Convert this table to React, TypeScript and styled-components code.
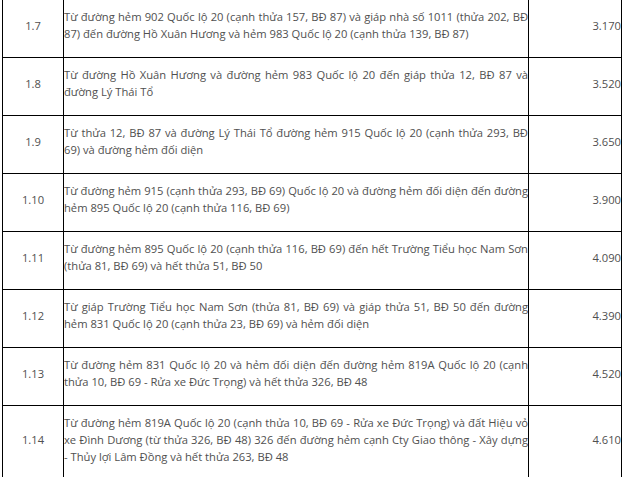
import React from 'react';
import styled, { createGlobalStyle } from 'styled-components';

const GlobalStyle = createGlobalStyle`
html, body{
  margin: 0;
  padding: 0;
  background: #FFFFFF;
  overflow: hidden;
}
`;

const Wrapper = styled.div`
padding: 0 0 0 2px;
margin-top: -1px;
`;

const PriceTable = styled.table`
width: 620px;
table-layout: fixed;
border-collapse: collapse;
font-family: "Open Sans", "Noto Sans", sans-serif;
font-size: 11.2px;
line-height: 17px;
color: #505050;
  td{
  border: 1px solid #000000;
  padding: 8px 0 15px 0;
  vertical-align: middle;
  }
`;

const NoCol = styled.col`
width: 61px;
`;

const TextCol = styled.col`
width: 465px;
`;

const PriceCol = styled.col`
width: 93px;
`;

const NoCell = styled.td`
text-align: center;
`;

const TextCell = styled.td`
text-align: justify;
`;

const PriceCell = styled.td`
text-align: right;
`;

type Row = { no: string; text: string; price: string };

const rows: Row[] = [
  {
    no: '1.7',
    text: 'Từ đường hẻm 902 Quốc lộ 20 (cạnh thửa 157, BĐ 87) và giáp nhà số 1011 (thửa 202, BĐ 87) đến đường Hồ Xuân Hương và hẻm 983 Quốc lộ 20 (cạnh thửa 139, BĐ 87)',
    price: '3.170',
  },
  {
    no: '1.8',
    text: 'Từ đường Hồ Xuân Hương và đường hẻm 983 Quốc lộ 20 đến giáp thửa 12, BĐ 87 và đường Lý Thái Tổ',
    price: '3.520',
  },
  {
    no: '1.9',
    text: 'Từ thửa 12, BĐ 87 và đường Lý Thái Tổ đường hẻm 915 Quốc lộ 20 (cạnh thửa 293, BĐ 69) và đường hẻm đối diện',
    price: '3.650',
  },
  {
    no: '1.10',
    text: 'Từ đường hẻm 915 (cạnh thửa 293, BĐ 69) Quốc lộ 20 và đường hẻm đối diện đến đường hẻm 895 Quốc lộ 20 (cạnh thửa 116, BĐ 69)',
    price: '3.900',
  },
  {
    no: '1.11',
    text: 'Từ đường hẻm 895 Quốc lộ 20 (cạnh thửa 116, BĐ 69) đến hết Trường Tiểu học Nam Sơn (thửa 81, BĐ 69) và hết thửa 51, BĐ 50',
    price: '4.090',
  },
  {
    no: '1.12',
    text: 'Từ giáp Trường Tiểu học Nam Sơn (thửa 81, BĐ 69) và giáp thửa 51, BĐ 50 đến đường hẻm 831 Quốc lộ 20 (cạnh thửa 23, BĐ 69) và hẻm đối diện',
    price: '4.390',
  },
  {
    no: '1.13',
    text: 'Từ đường hẻm 831 Quốc lộ 20 và hẻm đối diện đến đường hẻm 819A Quốc lộ 20 (cạnh thửa 10, BĐ 69 - Rửa xe Đức Trọng) và hết thửa 326, BĐ 48',
    price: '4.520',
  },
  {
    no: '1.14',
    text: 'Từ đường hẻm 819A Quốc lộ 20 (cạnh thửa 10, BĐ 69 - Rửa xe Đức Trọng) và đất Hiệu vỏ xe Đình Dương (từ thửa 326, BĐ 48) 326 đến đường hẻm cạnh Cty Giao thông - Xây dựng - Thủy lợi Lâm Đồng và hết thửa 263, BĐ 48',
    price: '4.610',
  },
  {
    no: '1.15',
    text: 'Từ đường hẻm cạnh Cty Giao thông - Xây dựng - Thủy lợi Lâm Đồng đến hết thửa 263, BĐ 48',
    price: '4.700',
  },
];

function App() {
  return (
    <Wrapper>
      <GlobalStyle/>
      <PriceTable>
        <colgroup>
          <NoCol/>
          <TextCol/>
          <PriceCol/>
        </colgroup>
        <tbody>
          {rows.map(r => (
            <tr key={r.no}>
              <NoCell>{r.no}</NoCell>
              <TextCell>{r.text}</TextCell>
              <PriceCell>{r.price}</PriceCell>
            </tr>
          ))}
        </tbody>
      </PriceTable>
    </Wrapper>
  );
}

export default App;
